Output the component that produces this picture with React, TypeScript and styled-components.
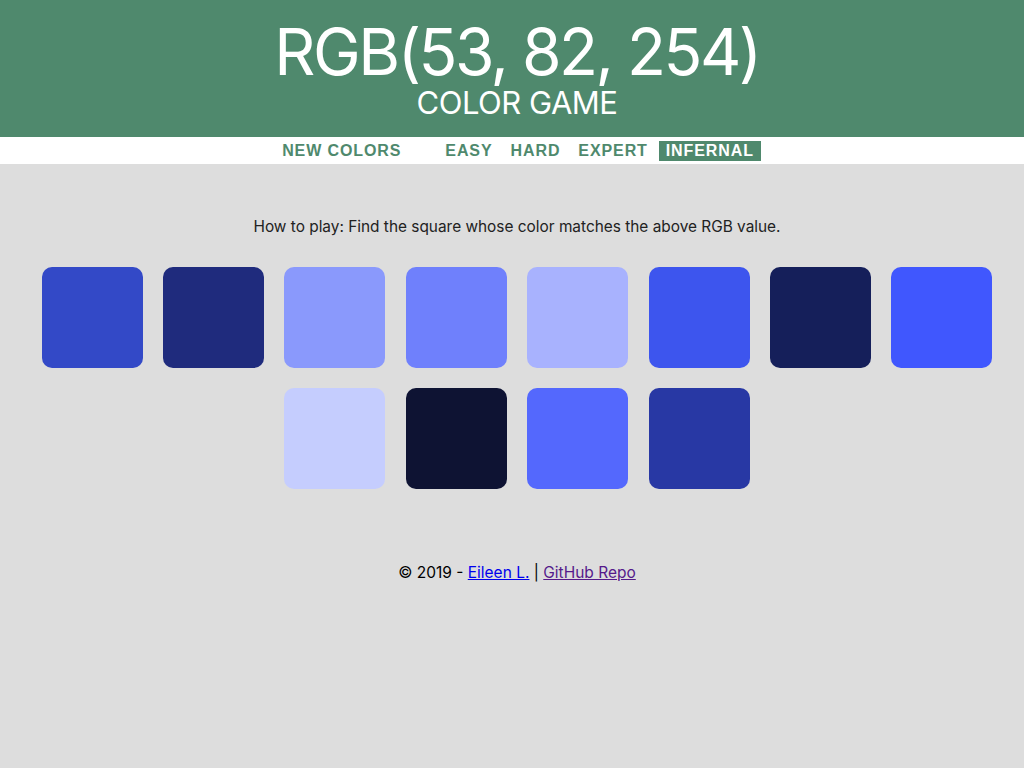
import React from "react";
import styled, { createGlobalStyle } from "styled-components";

const GREEN = "#4f896d";

const SQUARES = [
  "#3349c7",
  "#1f2b7d",
  "#8a99fc",
  "#6f80fc",
  "#a8b2fe",
  "#3d55ee",
  "#151f5a",
  "#4057fe",
  "#c5cdfe",
  "#0e1333",
  "#5468fd",
  "#2838a4",
];

const LEVELS = ["EASY", "HARD", "EXPERT", "INFERNAL"];

const GlobalStyle = createGlobalStyle`
  html, body {
    margin: 0;
    padding: 0;
    background: #dddddd;
    font-family: Inter, "Liberation Sans", sans-serif;
  }
`;

const Page = styled.div`
  min-height: 768px;
  background: #dddddd;
`;

const Header = styled.header`
  height: 137px;
  background: ${GREEN};
  color: #ffffff;
  display: flex;
  flex-direction: column;
  align-items: center;
  justify-content: flex-start;
  padding-left: 10px;
  box-sizing: border-box;
`;

const Title = styled.h1`
  margin: 21px 0 0;
  font-size: 64px;
  font-weight: 400;
  line-height: 62px;
  letter-spacing: -2.5px;
`;

const Subtitle = styled.h2`
  margin: 4px 0 0;
  font-size: 31px;
  font-weight: 400;
  line-height: 32px;
  letter-spacing: -0.5px;
`;

const Nav = styled.nav`
  height: 27px;
  background: #ffffff;
  display: flex;
  justify-content: center;
  align-items: center;
  padding-left: 12px;
`;

const NavButton = styled.button<{ $active?: boolean; $spaced?: boolean }>`
  border: none;
  outline: none;
  height: 20px;
  padding: 1px 7px 0;
  margin: 0 2px;
  margin-right: ${p => (p.$spaced ? "28px" : "2px")};
  font-family: "Liberation Sans", Arial, sans-serif;
  font-weight: 700;
  font-size: 16px;
  letter-spacing: 0.9px;
  color: ${p => (p.$active ? "#ffffff" : GREEN)};
  background: ${p => (p.$active ? GREEN : "transparent")};
  cursor: pointer;
`;

const Main = styled.main`
  padding-left: 10px;
  display: flex;
  flex-direction: column;
  align-items: center;
`;

const HowTo = styled.p`
  margin: 53px 0 0;
  font-size: 15.4px;
  line-height: 20px;
  color: #222222;
`;

const Grid = styled.div`
  margin-top: 20px;
  width: 980px;
  display: flex;
  flex-wrap: wrap;
  justify-content: center;
`;

const Square = styled.div<{ $color: string }>`
  width: 101px;
  height: 101px;
  margin: 10px 10.2px;
  border-radius: 10px;
  background: ${p => p.$color};
  cursor: pointer;
`;

const Footer = styled.footer`
  margin-top: 64px;
  font-size: 15.5px;
  line-height: 20px;
  color: #000000;

  a {
    color: #0000ee;
  }
  a.visited {
    color: #551a8b;
  }
`;

export default function App() {
  return (
    <Page>
      <GlobalStyle />
      <Header>
        <Title>RGB(53, 82, 254)</Title>
        <Subtitle>COLOR GAME</Subtitle>
      </Header>
      <Nav>
        <NavButton $spaced>NEW COLORS</NavButton>
        {LEVELS.map(level => (
          <NavButton key={level} $active={level === "INFERNAL"}>
            {level}
          </NavButton>
        ))}
      </Nav>
      <Main>
        <HowTo>
          How to play: Find the square whose color matches the above RGB value.
        </HowTo>
        <Grid>
          {SQUARES.map((color, i) => (
            <Square key={i} $color={color} />
          ))}
        </Grid>
        <Footer>
          © 2019 - <a href="#">Eileen L.</a> |{" "}
          <a className="visited" href="#">
            GitHub Repo
          </a>
        </Footer>
      </Main>
    </Page>
  );
}
